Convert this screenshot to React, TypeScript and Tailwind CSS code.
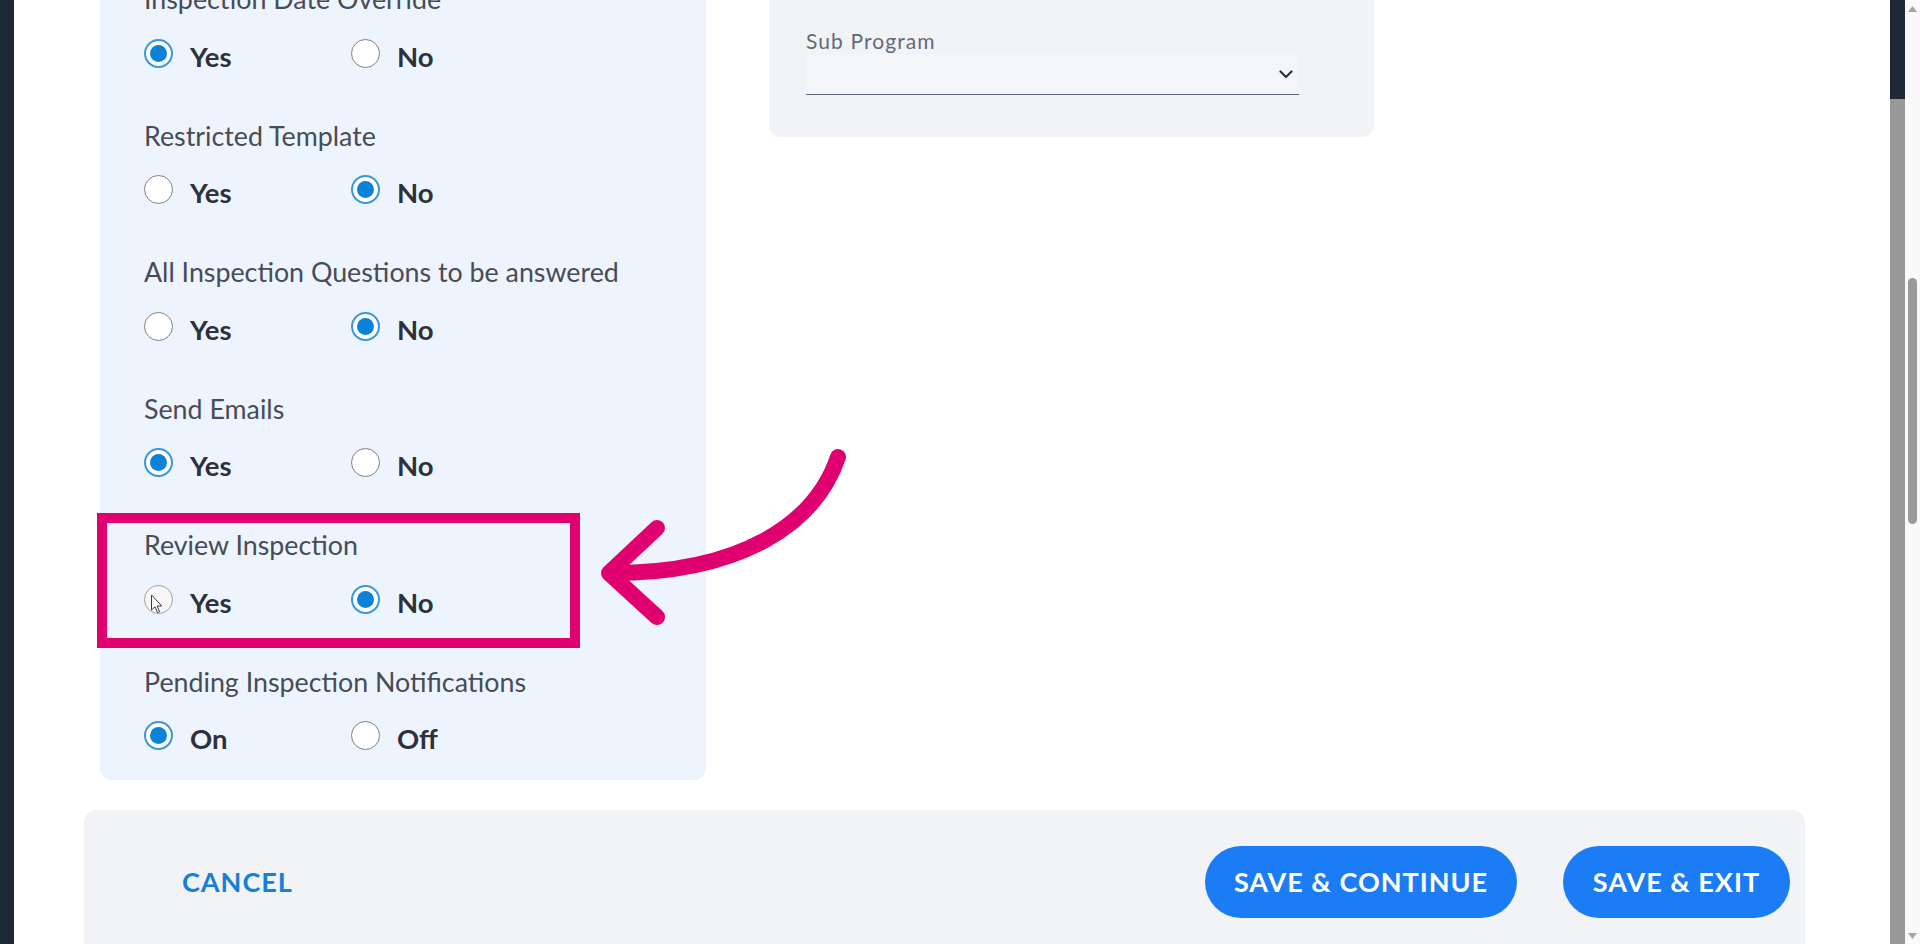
import React from 'react';

type Option = { label: string; checked: boolean; hover?: boolean };
type Setting = { title: string; options: Option[] };

const settings: Setting[] = [
  {
    title: 'Inspection Date Override',
    options: [
      { label: 'Yes', checked: true },
      { label: 'No', checked: false },
    ],
  },
  {
    title: 'Restricted Template',
    options: [
      { label: 'Yes', checked: false },
      { label: 'No', checked: true },
    ],
  },
  {
    title: 'All Inspection Questions to be answered',
    options: [
      { label: 'Yes', checked: false },
      { label: 'No', checked: true },
    ],
  },
  {
    title: 'Send Emails',
    options: [
      { label: 'Yes', checked: true },
      { label: 'No', checked: false },
    ],
  },
  {
    title: 'Review Inspection',
    options: [
      { label: 'Yes', checked: false, hover: true },
      { label: 'No', checked: true },
    ],
  },
  {
    title: 'Pending Inspection Notifications',
    options: [
      { label: 'On', checked: true },
      { label: 'Off', checked: false },
    ],
  },
];

const Radio = ({ checked, hover }: { checked: boolean; hover?: boolean }) =>
  checked ? (
    <span className="flex h-[29px] w-[29px] shrink-0 items-center justify-center rounded-full border-2 border-[#3a96dd] bg-white">
      <span className="h-[17px] w-[17px] rounded-full bg-[#0a82d7]" />
    </span>
  ) : (
    <span
      className={
        hover
          ? 'h-[29px] w-[29px] shrink-0 rounded-full border-[1.5px] border-[#a0a0a0] bg-[#f6f6f6]'
          : 'h-[29px] w-[29px] shrink-0 rounded-full border-[1.5px] border-[#808080] bg-white'
      }
    />
  );

const App = () => {
  return (
    <div className="relative flex h-[944px] w-full overflow-hidden bg-white font-[Lato,sans-serif]">
      <div className="w-[14px] shrink-0 bg-[#1c2833]" />

      <main className="min-w-0 flex-1 overflow-hidden">
        <div className="-mt-[49px] px-[70px]">
          <div className="ml-[16px] flex items-start gap-[63px]">
            {/* settings panel */}
            <div className="w-[606px] shrink-0 rounded-[12px] bg-[#edf4fe] pb-[29.5px] pl-[44px] pt-[32px]">
              <div className="flex flex-col gap-[51.5px]">
                {settings.map((s) => (
                  <div key={s.title}>
                    <p className="text-[26.8px] leading-[32px] text-[#474c56]">{s.title}</p>
                    <div className="mt-[23px] flex h-[30px] items-center">
                      {s.options.map((o) => (
                        <label key={o.label} className="flex w-[207px] items-center gap-[17px]">
                          <Radio checked={o.checked} hover={o.hover} />
                          <span className="pt-[7px] text-[27.5px] font-bold leading-[30px] text-[#2c313b]">
                            {o.label}
                          </span>
                        </label>
                      ))}
                    </div>
                  </div>
                ))}
              </div>
            </div>

            {/* program card */}
            <div className="w-[605px] shrink-0 rounded-[12px] bg-[#f2f3f7] pb-[42px] pl-[37px] pt-[77px]">
              <p className="mb-[1px] text-[21px] leading-[25px] tracking-[1.1px] text-[#5f6b7c]">Sub Program</p>
              <div className="flex h-[41px] w-[493px] items-center justify-end border-b-[1.5px] border-[#5b6679] bg-[#f5f6f9] pr-[6px]">
                <svg width="14" height="9" viewBox="0 0 14 9" fill="none">
                  <path d="M1.5 1.5 L7 7 L12.5 1.5" stroke="#2f3338" strokeWidth="2.2" strokeLinecap="round" strokeLinejoin="round" />
                </svg>
              </div>
            </div>
          </div>

          {/* action bar */}
          <div className="mt-[30px] flex h-[200px] w-[1721px] items-start justify-between rounded-[12px] bg-[#f2f3f7] pl-[98px] pr-[15px] pt-[36px]">
            <button className="flex h-[72px] items-center text-[27px] font-bold tracking-[1px] text-[#1680d8]">
              CANCEL
            </button>
            <div className="flex gap-[46px]">
              <button className="h-[72px] w-[312px] rounded-full bg-[#1c7cf5] text-[27px] font-bold tracking-[1px] text-white">
                SAVE &amp; CONTINUE
              </button>
              <button className="h-[72px] w-[227px] rounded-full bg-[#1c7cf5] text-[27px] font-bold tracking-[1px] text-white">
                SAVE &amp; EXIT
              </button>
            </div>
          </div>
        </div>
      </main>

      {/* outer gutter */}
      <div className="flex w-[15px] shrink-0 flex-col bg-[#989898]">
        <div className="h-[99px] bg-[#1e2935]" />
      </div>

      {/* scrollbar */}
      <div className="flex w-[15px] shrink-0 flex-col items-center bg-[#f9f9f9]">
        <div className="flex h-[17px] items-center">
          <svg width="9" height="6" viewBox="0 0 9 6">
            <path d="M0 6 L4.5 0 L9 6 Z" fill="#a3a3a3" />
          </svg>
        </div>
        <div className="mt-[261px] h-[246px] w-[9px] rounded-full bg-[#9a9a9a]" />
        <div className="flex-1" />
        <div className="flex h-[17px] items-center">
          <svg width="9" height="6" viewBox="0 0 9 6">
            <path d="M0 0 L9 0 L4.5 6 Z" fill="#a3a3a3" />
          </svg>
        </div>
      </div>

      {/* annotation: highlight box */}
      <div className="pointer-events-none absolute left-[97px] top-[513px] h-[135px] w-[483px] border-[10px] border-[#e1006f]" />

      {/* annotation: arrow + cursor */}
      <svg className="pointer-events-none absolute inset-0 h-full w-full" viewBox="0 0 1920 944" fill="none">
        <path
          d="M838 457 C815 525 740 573 612 573"
          stroke="#e1006f"
          strokeWidth="16"
          strokeLinecap="round"
        />
        <path
          d="M657 528 L609 573 L657 617"
          stroke="#e1006f"
          strokeWidth="16"
          strokeLinecap="round"
          strokeLinejoin="round"
        />
        <path
          d="M151.5 595 L151.5 610 L155 606.8 L157.6 612.6 L159.6 611.7 L157.1 606 L161.8 606 Z"
          fill="#ffffff"
          stroke="#3a3a3a"
          strokeWidth="1"
          strokeLinejoin="round"
        />
      </svg>
    </div>
  );
};

export default App;
